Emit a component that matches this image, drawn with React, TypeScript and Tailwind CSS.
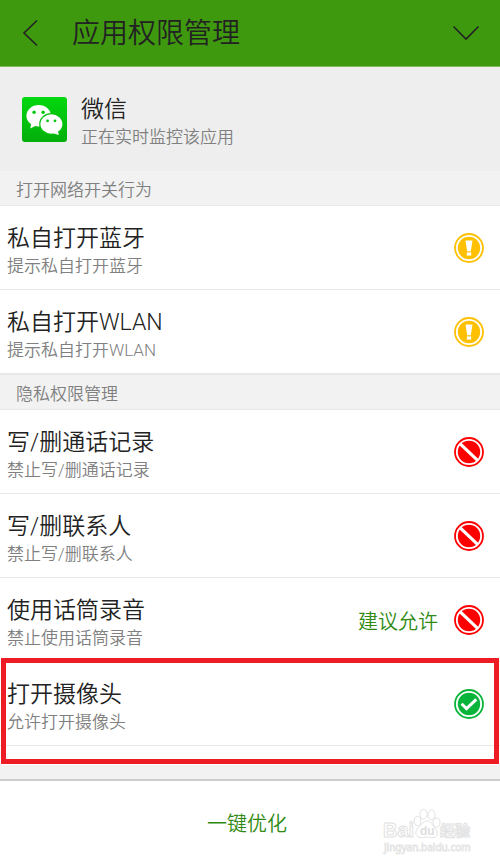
type Status = "ask" | "deny" | "allow";

type Permission = {
  name: string;
  detail: string;
  status: Status;
  hint?: string;
};

const networkItems: Permission[] = [
  { name: "私自打开蓝牙", detail: "提示私自打开蓝牙", status: "ask" },
  { name: "私自打开WLAN", detail: "提示私自打开WLAN", status: "ask" },
];

const privacyItems: Permission[] = [
  { name: "写/删通话记录", detail: "禁止写/删通话记录", status: "deny" },
  { name: "写/删联系人", detail: "禁止写/删联系人", status: "deny" },
  { name: "使用话筒录音", detail: "禁止使用话筒录音", status: "deny", hint: "建议允许" },
];

const cameraItem: Permission = { name: "打开摄像头", detail: "允许打开摄像头", status: "allow" };

const statusColor: Record<Status, string> = {
  ask: "#ffc000",
  deny: "#ff0000",
  allow: "#09b43a",
};

function StatusIcon({ status }: { status: Status }) {
  const color = statusColor[status];
  return (
    <svg viewBox="0 0 30 30" className="size-[30px]" aria-hidden="true">
      <circle cx="15" cy="15" r="14" fill="#fff" stroke={color} strokeWidth="1.8" />
      <circle cx="15" cy="15" r="11.2" fill={color} />
      {status === "ask" && (
        <g fill="#fff">
          <path d="M11.500 7.500h7l-1.700 10.800h-3.600z" />
          <path d="M12.800 19.400h4.400v3.200h-4.400z" />
        </g>
      )}
      {status === "deny" && <path d="M6.2 6.8 23.6 23.4" stroke="#fff" strokeWidth="3.2" />}
      {status === "allow" && (
        <path d="m7.600 14.800 4.900 4.800 9.800-9.200" fill="none" stroke="#fff" strokeWidth="3" />
      )}
    </svg>
  );
}

function PermissionRow({ item }: { item: Permission }) {
  return (
    <li className="flex h-[84px] items-center border-b border-[#e8e8e8] bg-white pr-4 pl-[7px]">
      <div className="min-w-0 flex-1 pt-[6px]">
        <h3 className="text-[23px] leading-[30px] text-[#222]">{item.name}</h3>
        <p className="text-[17px] leading-6 text-[#808080]">{item.detail}</p>
      </div>
      {item.hint && (
        <span className="mr-4 pt-1 text-[20px] leading-7 text-[#2f8a12]">{item.hint}</span>
      )}
      <button type="button" aria-label={item.name}>
        <StatusIcon status={item.status} />
      </button>
    </li>
  );
}

function WeChatIcon() {
  return (
    <svg viewBox="0 0 45 45" className="size-[45px]" aria-hidden="true">
      <defs>
        <linearGradient id="wechat" x1="0" y1="0" x2="0" y2="1">
          <stop offset="0" stopColor="#02d80f" />
          <stop offset="1" stopColor="#04ae0b" />
        </linearGradient>
      </defs>
      <rect width="45" height="45" rx="3" fill="url(#wechat)" />
      <ellipse cx="16.7" cy="18.8" rx="12.3" ry="10.7" fill="#fff" />
      <path d="M9.4 26 8.3 31.6 14.2 28.6z" fill="#fff" />
      <ellipse cx="29.4" cy="27" rx="12.2" ry="10.9" fill="#03c20d" />
      <ellipse cx="29.4" cy="27" rx="11" ry="9.7" fill="#fff" />
      <path d="m31 36.2 5.8 1.9-1-5z" fill="#fff" />
      <g fill="#03c80d">
        <circle cx="12.1" cy="15.2" r="1.7" />
        <circle cx="21.1" cy="15.2" r="1.7" />
        <circle cx="25.6" cy="23.8" r="1.4" />
        <circle cx="33" cy="23.8" r="1.4" />
      </g>
    </svg>
  );
}

function Watermark() {
  return (
    <svg
      viewBox="0 0 92 48"
      className="pointer-events-none absolute right-[26px] bottom-2 h-12 w-[92px]"
      role="img"
      aria-label="Baidu 经验"
    >
      <g fill="#fff" stroke="#e2e2e2" strokeWidth="1">
        <ellipse cx="35.5" cy="13" rx="3.3" ry="4.5" />
        <ellipse cx="41.5" cy="6.3" rx="3.6" ry="5" />
        <ellipse cx="49.5" cy="6.8" rx="3.5" ry="5" />
        <ellipse cx="54.5" cy="14.5" rx="3.5" ry="4.5" />
        <path d="M45 13c4 0 5 4 8 7 3 3 3.500 8-1 9.500-3 .8-5-.5-7-.5s-5 1.300-8 .3c-4-1.500-4-6.500-1-9.300 4-3.500 5-7 9-7z" />
        <text x="1" y="29" fontSize="20" fontWeight="700" className="font-['Liberation_Sans',sans-serif]">
          Bai
        </text>
        <text x="58" y="28" fontSize="15" fontWeight="700" className="font-['Noto_Sans_CJK_SC',sans-serif]">
          经验
        </text>
      </g>
      <text x="38" y="27" fontSize="12" fontWeight="700" fill="#dedede" className="font-['Liberation_Sans',sans-serif]">
        du
      </text>
      <text
        x="2"
        y="43"
        fontSize="10"
        fontWeight="400"
        fill="#fff"
        stroke="#e4e4e4"
        strokeWidth="0.8"
        className="font-['Noto_Sans',sans-serif]"
      >
        jingyan.baidu.com
      </text>
    </svg>
  );
}

const sectionClass = "bg-[#f2f2f2] pt-1 pl-4 text-[17px] leading-[30px] text-[#808080]";

export default function App() {
  return (
    <div className="flex min-h-screen flex-col bg-[#f2f2f2] font-['Roboto','Noto_Sans_CJK_SC',sans-serif] font-[350]">
      <header className="flex h-[67px] items-center border-b border-[#7fbd5e] bg-[#3f990f] pr-5 pl-[22px] text-[#222]">
        <button type="button" aria-label="返回">
          <svg viewBox="0 0 16 28" className="h-7 w-4" fill="none" stroke="currentColor" strokeWidth="1.6">
            <path d="M15 1.500 2 14l13 12.500" />
          </svg>
        </button>
        <h1 className="ml-[34px] flex-1 pt-[2px] text-[28px] leading-10 font-[350]">应用权限管理</h1>
        <button type="button" aria-label="展开">
          <svg viewBox="0 0 28 16" className="h-4 w-7" fill="none" stroke="currentColor" strokeWidth="1.6">
            <path d="M1.500 1.500 14 14 26.500 1.500" />
          </svg>
        </button>
      </header>

      <main className="flex-1">
        <section className="flex h-[104px] items-center gap-[14px] bg-[#eee] pl-[22px]">
          <WeChatIcon />
          <div className="pt-[6px]">
            <h2 className="text-[23px] leading-[30px] text-[#222]">微信</h2>
            <p className="text-[17px] leading-6 text-[#808080]">正在实时监控该应用</p>
          </div>
        </section>

        <h2 className={`border-b border-[#e8e8e8] ${sectionClass}`}>打开网络开关行为</h2>
        <ul>
          {networkItems.map((item) => (
            <PermissionRow key={item.name} item={item} />
          ))}
        </ul>

        <h2 className={`border-y border-[#e8e8e8] ${sectionClass}`}>隐私权限管理</h2>
        <ul>
          {privacyItems.map((item) => (
            <PermissionRow key={item.name} item={item} />
          ))}
        </ul>
        <div className="relative bg-white pb-[19px]">
          <ul>
            <PermissionRow item={cameraItem} />
          </ul>
          <div className="pointer-events-none absolute inset-x-px -top-1 bottom-px border-[5px] border-[#ee1c25]" />
        </div>
      </main>

      <footer className="relative flex h-[85px] items-center justify-center border-t-2 border-[#ccc] bg-white">
        <button type="button" className="pt-[2px] pr-[6px] text-[20px] leading-7 text-[#2f8a12]">
          一键优化
        </button>
        <Watermark />
      </footer>
    </div>
  );
}
